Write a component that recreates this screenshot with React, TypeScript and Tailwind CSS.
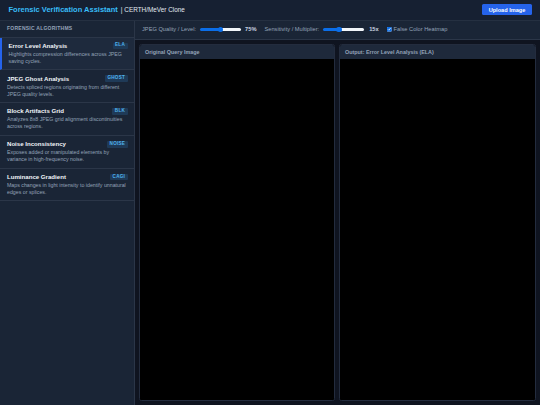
const FONT = "font-['Liberation_Sans',Arial,sans-serif]";

const algos = [
  { name: "Error Level Analysis", tag: "ELA", desc: "Highlights compression differences across JPEG saving cycles.", active: true },
  { name: "JPEG Ghost Analysis", tag: "GHOST", desc: "Detects spliced regions originating from different JPEG quality levels." },
  { name: "Block Artifacts Grid", tag: "BLK", desc: "Analyzes 8x8 JPEG grid alignment discontinuities across regions." },
  { name: "Noise Inconsistency", tag: "NOISE", desc: "Exposes added or manipulated elements by variance in high-frequency noise." },
  { name: "Luminance Gradient", tag: "CAGI", desc: "Maps changes in light intensity to identify unnatural edges or splices." },
];

function Slider({ value }: { value: number }) {
  return (
    <input
      type="range"
      min={0}
      max={100}
      defaultValue={value}
      style={{ "--v": `${value}%` } as React.CSSProperties}
      className="block w-[41px] h-[6px] bg-transparent appearance-none cursor-pointer [&::-webkit-slider-runnable-track]:h-[2.6px] [&::-webkit-slider-runnable-track]:rounded-full [&::-webkit-slider-runnable-track]:bg-[linear-gradient(to_right,#0b6ee8_var(--v),#f1f5f9_var(--v))] [&::-webkit-slider-thumb]:appearance-none [&::-webkit-slider-thumb]:w-[5.4px] [&::-webkit-slider-thumb]:h-[5.4px] [&::-webkit-slider-thumb]:mt-[-1.4px] [&::-webkit-slider-thumb]:rounded-full [&::-webkit-slider-thumb]:bg-[#0b6ee8]"
    />
  );
}

function Panel({ title, className }: { title: string; className: string }) {
  return (
    <div className={`${className} flex flex-col rounded-[2.5px] overflow-hidden border-[0.5px] border-[#232c3e] bg-black`}>
      <div className="h-[13.5px] shrink-0 flex items-center px-[5px] bg-[#1e293b] text-[5.4px] font-bold text-[#94a3b8]">
        {title}
      </div>
      <div className="flex-1 bg-black" />
    </div>
  );
}

export default function App() {
  return (
    <div className={`${FONT} w-[540px] h-[405px] flex flex-col overflow-hidden bg-[#0f1420]`}>
      <header className="h-[20.5px] shrink-0 flex items-center justify-between pl-[8.5px] pr-[8px] bg-[#162032] border-b-[0.5px] border-[#253041]">
        <div className="flex items-center gap-[3px]">
          <span className="text-[7.5px] font-bold text-[#38bdf8]">Forensic Verification Assistant</span>
          <span className="text-[6.4px] text-[#e2e8f0]">| CERTH/MeVer Clone</span>
        </div>
        <button className="h-[11px] w-[50px] rounded-[1.5px] bg-[#2563eb] text-white text-[5.6px] font-bold">
          Upload Image
        </button>
      </header>
      <div className="flex-1 flex min-h-0">
        <aside className="w-[135px] shrink-0 bg-[#1a2536] border-r-[0.5px] border-[#2b3648] flex flex-col">
          <div className="h-[17px] shrink-0 flex items-center px-[7px] border-b-[0.5px] border-[#2b3648] text-[5px] font-bold tracking-[0.25px] text-[#94a3b8]">
            FORENSIC ALGORITHMS
          </div>
          {algos.map((a) => (
            <div
              key={a.name}
              className={`h-[32.8px] shrink-0 flex flex-col justify-center border-b-[0.5px] border-[#2b3648] pr-[6.5px] ${
                a.active ? "bg-[#1e2a3d] border-l-[2px] border-l-[#2563eb] pl-[6.5px]" : "pl-[7px]"
              }`}
            >
              <div className="flex items-center justify-between">
                <span className="text-[6.1px] font-bold text-[#f1f5f9] leading-[8px]">{a.name}</span>
                <span className="px-[2.6px] h-[6.6px] flex items-center rounded-[1px] bg-[#1f3a57] text-[#4fb3ee] text-[4.6px] font-bold tracking-[0.2px]">
                  {a.tag}
                </span>
              </div>
              <div className="mt-[1px] text-[5.25px] leading-[7px] text-[#94a3b8]">{a.desc}</div>
            </div>
          ))}
        </aside>
        <main className="flex-1 min-w-0 flex flex-col">
          <div className="h-[19.5px] shrink-0 flex items-center pl-[7px] bg-[#1a2536] border-b-[0.5px] border-[#2b3648] text-[5.7px] text-[#94a3b8]">
            <span>JPEG Quality / Level:</span>
            <span className="ml-[4px]"><Slider value={50} /></span>
            <span className="ml-[4px] font-bold text-[#cbd5e1]">75%</span>
            <span className="ml-[8px]">Sensitivity / Multiplier:</span>
            <span className="ml-[4px]"><Slider value={37} /></span>
            <span className="ml-[5px] font-bold text-[#cbd5e1]">15x</span>
            <span className="ml-[8px] flex items-center gap-[1.5px]">
              <input type="checkbox" defaultChecked className="[zoom:0.42] m-0 accent-[#0b6ee8]" />
              False Color Heatmap
            </span>
          </div>
          <div className="flex-1 min-h-0 flex gap-[4px] p-[4px]">
            <Panel className="w-[196px] shrink-0" title="Original Query Image" />
            <Panel className="flex-1" title="Output: Error Level Analysis (ELA)" />
          </div>
        </main>
      </div>
    </div>
  );
}
